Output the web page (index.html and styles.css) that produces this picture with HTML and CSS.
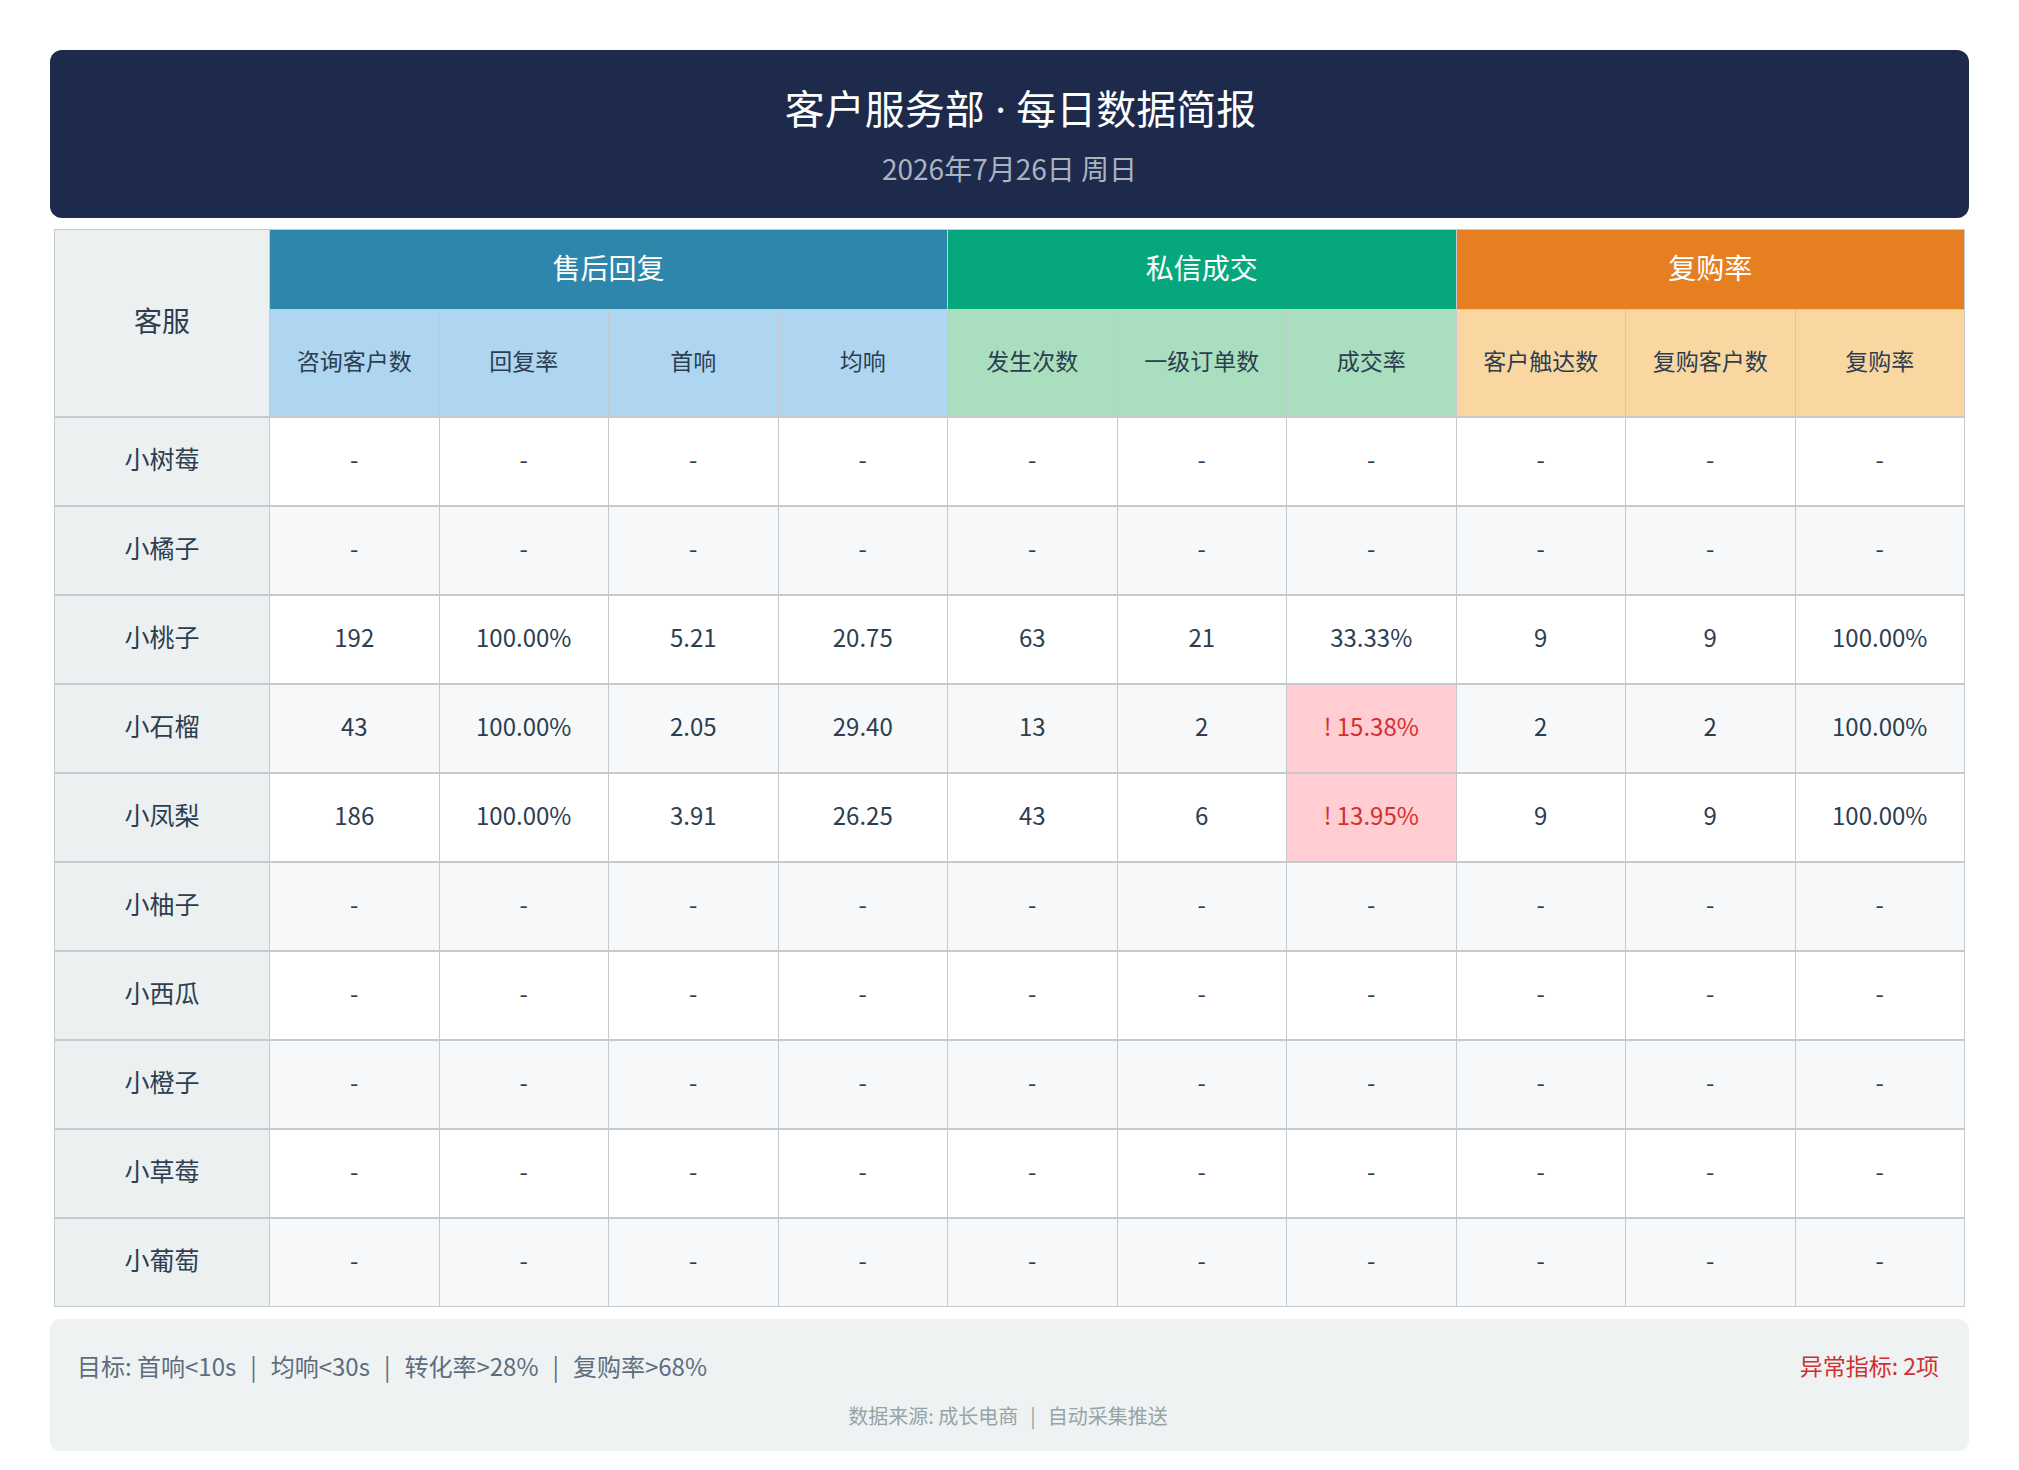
FILE: index.html
```html
<!DOCTYPE html>
<html lang="zh-CN">
<head>
<meta charset="utf-8">
<title>客户服务部 · 每日数据简报</title>
<link rel="stylesheet" href="styles.css">
</head>
<body>
<div class="page">
  <header class="banner">
    <h1 class="banner-title">客户服务部<span class="dot"> · </span>每日数据简报</h1>
    <div class="banner-date">2026年7月26日 周日</div>
  </header>

  <div class="table-wrap">
    <table class="report">
      <colgroup>
        <col class="col-name">
        <col><col><col><col><col><col><col><col><col><col>
      </colgroup>
      <thead>
        <tr>
          <th class="corner" rowspan="2">客服</th>
          <th class="grp grp-blue" colspan="4">售后回复</th>
          <th class="grp grp-green" colspan="3">私信成交</th>
          <th class="grp grp-orange" colspan="3">复购率</th>
        </tr>
        <tr>
          <th class="sub sub-blue">咨询客户数</th>
          <th class="sub sub-blue">回复率</th>
          <th class="sub sub-blue">首响</th>
          <th class="sub sub-blue">均响</th>
          <th class="sub sub-green">发生次数</th>
          <th class="sub sub-green">一级订单数</th>
          <th class="sub sub-green">成交率</th>
          <th class="sub sub-orange">客户触达数</th>
          <th class="sub sub-orange">复购客户数</th>
          <th class="sub sub-orange">复购率</th>
        </tr>
      </thead>
      <tbody>
        <tr><th class="name">小树莓</th><td>-</td><td>-</td><td>-</td><td>-</td><td>-</td><td>-</td><td>-</td><td>-</td><td>-</td><td>-</td></tr>
        <tr><th class="name">小橘子</th><td>-</td><td>-</td><td>-</td><td>-</td><td>-</td><td>-</td><td>-</td><td>-</td><td>-</td><td>-</td></tr>
        <tr><th class="name">小桃子</th><td>192</td><td>100.00%</td><td>5.21</td><td>20.75</td><td>63</td><td>21</td><td>33.33%</td><td>9</td><td>9</td><td>100.00%</td></tr>
        <tr><th class="name">小石榴</th><td>43</td><td>100.00%</td><td>2.05</td><td>29.40</td><td>13</td><td>2</td><td class="alert">! 15.38%</td><td>2</td><td>2</td><td>100.00%</td></tr>
        <tr><th class="name">小凤梨</th><td>186</td><td>100.00%</td><td>3.91</td><td>26.25</td><td>43</td><td>6</td><td class="alert">! 13.95%</td><td>9</td><td>9</td><td>100.00%</td></tr>
        <tr><th class="name">小柚子</th><td>-</td><td>-</td><td>-</td><td>-</td><td>-</td><td>-</td><td>-</td><td>-</td><td>-</td><td>-</td></tr>
        <tr><th class="name">小西瓜</th><td>-</td><td>-</td><td>-</td><td>-</td><td>-</td><td>-</td><td>-</td><td>-</td><td>-</td><td>-</td></tr>
        <tr><th class="name">小橙子</th><td>-</td><td>-</td><td>-</td><td>-</td><td>-</td><td>-</td><td>-</td><td>-</td><td>-</td><td>-</td></tr>
        <tr><th class="name">小草莓</th><td>-</td><td>-</td><td>-</td><td>-</td><td>-</td><td>-</td><td>-</td><td>-</td><td>-</td><td>-</td></tr>
        <tr><th class="name">小葡萄</th><td>-</td><td>-</td><td>-</td><td>-</td><td>-</td><td>-</td><td>-</td><td>-</td><td>-</td><td>-</td></tr>
      </tbody>
    </table>
  </div>

  <footer class="foot">
    <div class="foot-row">
      <div class="targets">目标: 首响&lt;10s<span class="sep">|</span>均响&lt;30s<span class="sep">|</span>转化率&gt;28%<span class="sep">|</span>复购率&gt;68%</div>
      <div class="abnormal">异常指标: 2项</div>
    </div>
    <div class="source">数据来源: 成长电商<span class="sep">|</span>自动采集推送</div>
  </footer>
</div>
</body>
</html>
```

FILE: styles.css
```css
* { box-sizing: border-box; }

html, body {
  margin: 0;
  padding: 0;
  background: #ffffff;
}

body {
  font-family: "Noto Sans CJK SC", "Noto Sans", sans-serif;
  color: #2c3e50;
}

.page {
  padding: 50px 50px 0 50px;
}

.banner {
  background: #1d2a4b;
  border-radius: 12px;
  padding: 33px 0 33px;
  text-align: center;
}

.banner-title {
  margin: 0 0 18px;
  padding-left: 22px;
  font-size: 40px;
  line-height: 48px;
  font-weight: 400;
  color: #ffffff;
}

.banner-title .dot {
  font-family: "Noto Sans", sans-serif;
}

.banner-date {
  font-size: 28px;
  line-height: 34px;
  color: #a9b3c2;
}

.table-wrap {
  margin: 11px 4px 12px;
}

.report {
  width: 100%;
  table-layout: fixed;
  border-collapse: collapse;
  border: 1px solid #c5cace;
}

.col-name { width: 215px; }

.report th,
.report td {
  border: 1px solid #c5cace;
  text-align: center;
  vertical-align: middle;
  padding: 0 0 6px;
  font-weight: 400;
}

.report tbody tr { height: 89px; }
.report tbody tr th,
.report tbody tr td { border-top: 2px solid #c5cace; }

.corner {
  background: #ecf0f1;
  font-size: 28px;
  color: #2c3e50;
}

.grp {
  height: 80px;
  font-size: 28px;
  color: #ffffff;
}
.grp-blue { background: #2e86ab; }
.grp-green { background: #06a77d; }
.grp-orange { background: #e67e22; }

.sub {
  height: 107px;
  font-size: 23px;
  color: #2c3e50;
}
.sub-blue { background: #aed6f1; }
.sub-green { background: #a9dfbf; }
.sub-orange { background: #fad7a0; }

.name {
  background: #ecf0f1;
  font-size: 25px;
  color: #2c3e50;
}

.report td {
  font-size: 24px;
  color: #2c3e50;
  background: #ffffff;
}

.report tbody tr:nth-child(even) td { background: #f7f8fa; }

.report td.alert,
.report tbody tr:nth-child(even) td.alert {
  background: #ffcdd2;
  color: #d32f2f;
}

.foot {
  background: #eef2f3;
  border-radius: 10px;
  padding: 30px 30px 21px 27px;
}

.foot-row {
  display: flex;
  justify-content: space-between;
  align-items: center;
}

.targets {
  font-size: 24px;
  line-height: 33px;
  color: #5d6d7e;
}

.targets .sep {
  margin: 0 14px;
}

.abnormal {
  font-size: 23px;
  line-height: 33px;
  color: #d32f2f;
}

.source {
  margin-top: 20px;
  text-align: center;
  font-size: 20px;
  line-height: 28px;
  color: #95a5a6;
}

.source .sep {
  margin: 0 12px;
}
```
